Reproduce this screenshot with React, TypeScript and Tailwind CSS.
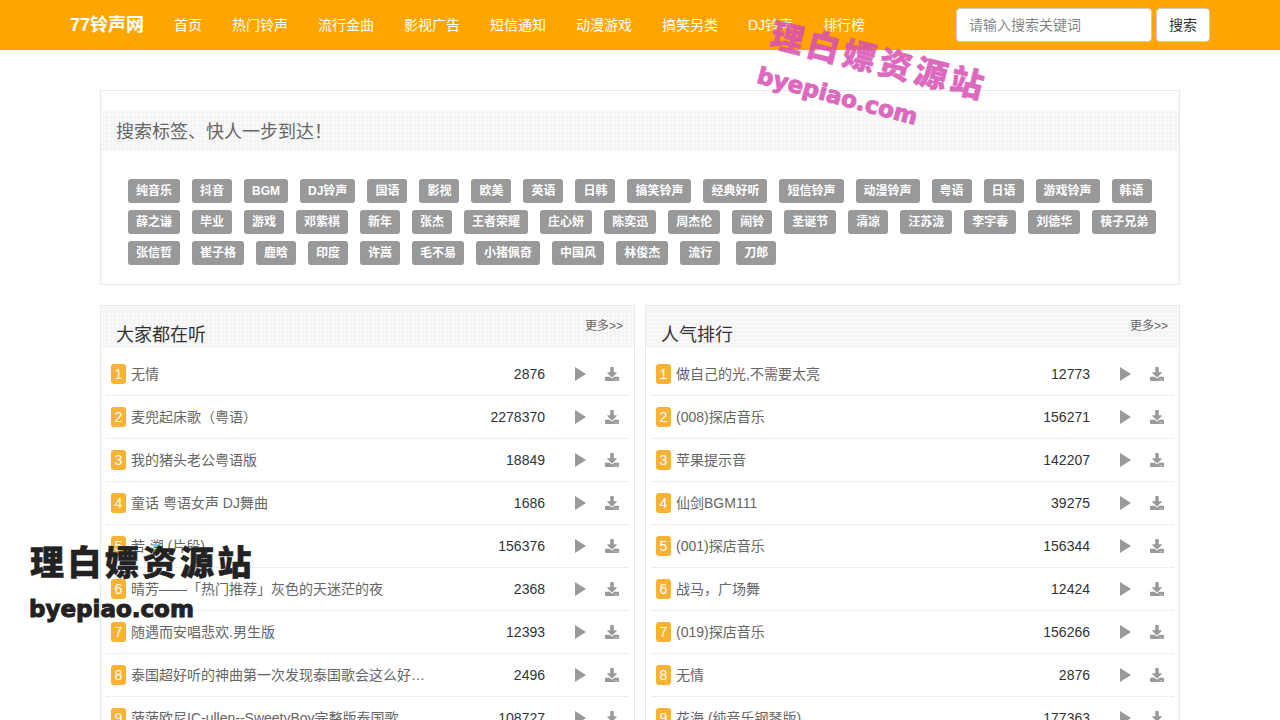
import { FaDownload } from "react-icons/fa";

const navItems = [
  "首页",
  "热门铃声",
  "流行金曲",
  "影视广告",
  "短信通知",
  "动漫游戏",
  "搞笑另类",
  "DJ铃声",
  "排行榜",
];

const tags = [
  "纯音乐", "抖音", "BGM", "DJ铃声", "国语", "影视", "欧美", "英语", "日韩", "搞笑铃声", "经典好听", "短信铃声", "动漫铃声", "粤语", "日语", "游戏铃声", "韩语",
  "薛之谦", "毕业", "游戏", "邓紫棋", "新年", "张杰", "王者荣耀", "庄心妍", "陈奕迅", "周杰伦", "闹铃", "圣诞节", "清凉", "汪苏泷", "李宇春", "刘德华", "筷子兄弟",
  "张信哲", "崔子格", "鹿晗", "印度", "许嵩", "毛不易", "小猪佩奇", "中国风", "林俊杰", "流行",
];

const listening: [string, string][] = [
  ["无情", "2876"],
  ["麦兜起床歌（粤语）", "2278370"],
  ["我的猪头老公粤语版", "18849"],
  ["童话 粤语女声 DJ舞曲", "1686"],
  ["若·溯 (片段)", "156376"],
  ["晴芳——「热门推荐」灰色的天迷茫的夜", "2368"],
  ["随遇而安唱悲欢.男生版", "12393"],
  ["泰国超好听的神曲第一次发现泰国歌会这么好听的歌", "2496"],
  ["菠菠欧尼IC-ullen--SweetyBoy完整版泰国歌", "108727"],
];

const popular: [string, string][] = [
  ["做自己的光,不需要太亮", "12773"],
  ["(008)探店音乐", "156271"],
  ["苹果提示音", "142207"],
  ["仙剑BGM111", "39275"],
  ["(001)探店音乐", "156344"],
  ["战马，广场舞", "12424"],
  ["(019)探店音乐", "156266"],
  ["无情", "2876"],
  ["花海 (纯音乐钢琴版)", "177363"],
];

const dots =
  "bg-[#f8f8f8] bg-[radial-gradient(#f2f2f2_1px,transparent_1px)] bg-[length:4px_4px]";

const tagClass =
  "flex h-6 items-center rounded-[3px] bg-[#999] px-2 text-xs font-bold text-white";

const SongRow = ({ rank, title, count }: { rank: number; title: string; count: string }) => (
  <li className="flex h-[43px] shrink-0 items-center border-b border-dotted border-[#ddd] pl-[5px] pr-[10px]">
    <span className="flex h-5 w-[15px] shrink-0 items-center justify-center rounded-[3px] bg-[#f9b233] text-sm text-white">
      {rank}
    </span>
    <span className="ml-[5px] w-[296px] truncate text-sm text-[#666]">{title}</span>
    <span className="w-[118px] text-right text-sm text-[#333]">{count}</span>
    <svg viewBox="0 0 11 14" className="ml-[30px] h-[14px] w-[11px] fill-[#999]">
      <polygon points="0,0 11,7 0,14" />
    </svg>
    <FaDownload className="ml-[19px] text-[14px] text-[#999]" />
  </li>
);

const SongPanel = ({ title, songs }: { title: string; songs: [string, string][] }) => (
  <section className="min-w-0 flex-1 border border-[#e8e8e8]">
    <div className={`relative h-[42px] ${dots}`}>
      <h2 className="pl-[15px] pt-4 text-lg leading-[26px] text-[#333]">{title}</h2>
      <a className="absolute right-[11px] top-[12px] text-xs text-[#666]">更多&gt;&gt;</a>
    </div>
    <ul className="flex flex-col px-[5px] pt-[5px]">
      {songs.map(([name, count], i) => (
        <SongRow key={name} rank={i + 1} title={name} count={count} />
      ))}
    </ul>
  </section>
);

export default function App() {
  return (
    <div className="relative h-[720px] overflow-hidden bg-white font-['Liberation_Sans','Noto_Sans_CJK_SC',sans-serif]">
      <header className="flex h-[50px] items-center bg-[#ffa500] pl-[70px]">
        <a className="w-[104px] text-lg font-bold text-white">77铃声网</a>
        <nav className="flex gap-[30px]">
          {navItems.map((item) => (
            <a key={item} className="text-sm text-white">
              {item}
            </a>
          ))}
        </nav>
        <div className="ml-auto mr-[70px] flex gap-1">
          <input
            className="h-[34px] w-[196px] rounded-[4px] border border-[#ccc] bg-white px-3 text-sm"
            placeholder="请输入搜索关键词"
          />
          <button className="h-[34px] w-[54px] rounded-[4px] border border-[#ccc] bg-white text-sm text-[#333]">
            搜索
          </button>
        </div>
      </header>

      <main className="mx-[100px] flex flex-col gap-5 pt-10">
        <section className="h-[195px] border border-[#e8e8e8] pt-5">
          <h2 className={`h-10 pl-[15px] pt-px text-lg leading-10 text-[#666] ${dots}`}>
            搜索标签、快人一步到达！
          </h2>
          <div className="flex flex-wrap gap-x-3 gap-y-[7px] pl-[27px] pr-5 pt-7">
            {tags.map((tag) => (
              <a key={tag} className={tagClass}>
                {tag}
              </a>
            ))}
            <a className={`${tagClass} ml-1`}>刀郎</a>
          </div>
        </section>

        <div className="flex gap-[10px]">
          <SongPanel title="大家都在听" songs={listening} />
          <SongPanel title="人气排行" songs={popular} />
        </div>
      </main>

      <div className="absolute left-[768px] top-[37px] rotate-[14deg] text-[33px] font-black tracking-[4px] whitespace-nowrap text-[#d84fb5] opacity-85 [-webkit-text-stroke:0.5px_#d84fb5]">
        理白嫖资源站
      </div>
      <div className="absolute left-[755px] top-[79px] rotate-[15deg] font-['DejaVu_Sans',sans-serif] text-[23px] font-bold whitespace-nowrap text-[#d84fb5] opacity-85 [-webkit-text-stroke:1px_#d84fb5]">
        byepiao.com
      </div>
      <div className="absolute left-[30px] top-[538px] text-[34px] font-black tracking-[3.5px] whitespace-nowrap text-[#222] [-webkit-text-stroke:0.5px_#222]">
        理白嫖资源站
      </div>
      <div className="absolute left-[29px] top-[592px] font-['DejaVu_Sans',sans-serif] text-[23px] font-bold whitespace-nowrap text-[#222] [-webkit-text-stroke:1px_#222]">
        byepiao.com
      </div>
    </div>
  );
}
